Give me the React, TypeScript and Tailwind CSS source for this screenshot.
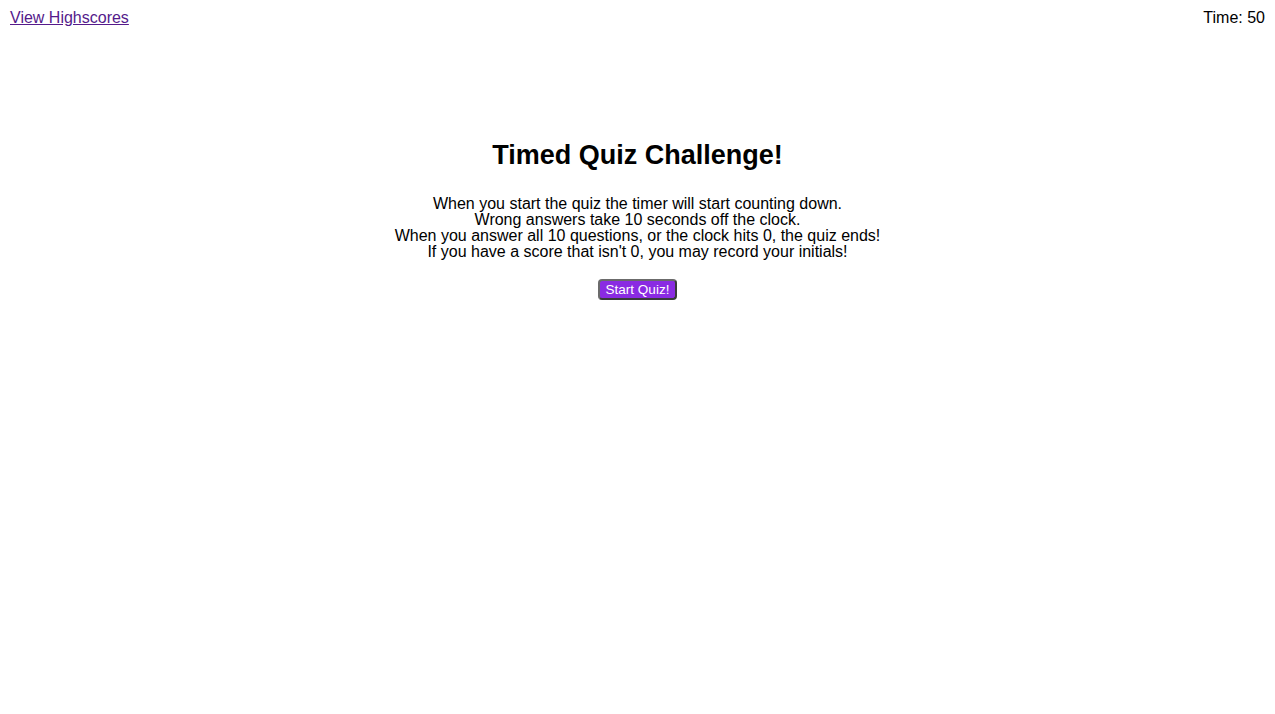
import React from "react";

export default function App() {
  return (
    <div className="min-h-[714px] bg-white text-black font-['Liberation_Sans',Arial,sans-serif]">
      {/* top bar */}
      <header className="flex justify-between px-[10px] pt-[9px] text-[16px] leading-[18px]">
        <a href="#" className="text-[#551a8b] underline">
          View Highscores
        </a>
        <span>Time: 50</span>
      </header>

      <main className="flex flex-col items-center mt-[113px] text-center">
        <h1 className="text-[27px] font-bold leading-[31px]">Timed Quiz Challenge!</h1>

        <p className="mt-[25px] text-[16px] leading-[16px]">
          When you start the quiz the timer will start counting down.
          <br />
          Wrong answers take 10 seconds off the clock.
          <br />
          When you answer all 10 questions, or the clock hits 0, the quiz ends!
          <br />
          If you have a score that isn't 0, you may record your initials!
        </p>

        <button className="mt-[19px] w-[79px] h-[21px] rounded-[4px] border-2 border-t-[#6b6b6b] border-l-[#6b6b6b] border-r-[#3a3a3a] border-b-[#3a3a3a] bg-[#8a2be2] text-white text-[13.5px] leading-[15px]">
          Start Quiz!
        </button>
      </main>
    </div>
  );
}
